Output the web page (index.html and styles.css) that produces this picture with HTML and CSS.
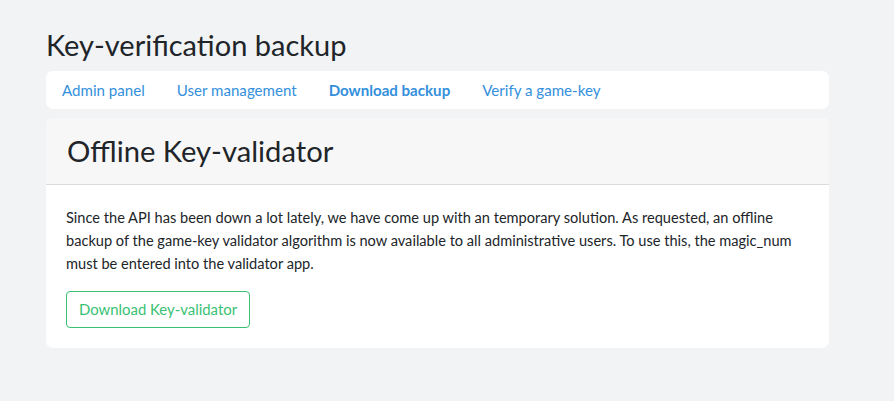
FILE: index.html
```html
<!DOCTYPE html>
<html lang="en">
<head>
<meta charset="utf-8">
<title>Key-verification backup</title>
<link rel="stylesheet" href="styles.css">
</head>
<body>
<div class="container">
  <h1 class="page-title">Key-verification backup</h1>
  <nav class="nav-card">
    <a class="nav-link" href="#">Admin panel</a>
    <a class="nav-link" href="#">User management</a>
    <a class="nav-link active" href="#">Download backup</a>
    <a class="nav-link" href="#">Verify a game-key</a>
  </nav>
  <section class="card">
    <header class="card-header">
      <h2 class="card-title">Offline Key-validator</h2>
    </header>
    <div class="card-body">
      <p class="card-text">Since the API has been down a lot lately, we have come up with an temporary solution. As requested, an offline backup of the game-key validator algorithm is now available to all administrative users. To use this, the magic_num must be entered into the validator app.</p>
      <a class="btn-outline" href="#">Download Key-validator</a>
    </div>
  </section>
</div>
</body>
</html>
```

FILE: styles.css
```css
html, body {
  margin: 0;
  padding: 0;
}
body {
  background: #f2f3f5;
  font-family: Lato, "Open Sans", sans-serif;
  color: #212529;
  font-size: 14.6px;
  line-height: 23px;
}
.container {
  width: 783px;
  padding: 0 0 0 46px;
}
.page-title {
  font-size: 29px;
  font-weight: 400;
  line-height: 35px;
  margin: 27px 0 9px 0;
}
.nav-card {
  display: flex;
  align-items: center;
  height: 38px;
  background: #fff;
  border-radius: 7px;
}
.nav-link {
  color: #3490dc;
  text-decoration: none;
  padding: 0 16px;
  font-size: 15.1px;
}
.nav-link.active {
  font-weight: 700;
}
.card {
  margin-top: 9px;
  background: #fff;
  border-radius: 7px;
  overflow: hidden;
}
.card-header {
  background: #f7f7f7;
  border-bottom: 1px solid #dcdcdc;
  padding: 15px 21px 16px 21px;
}
.card-title {
  margin: 0;
  font-size: 29.2px;
  font-weight: 400;
  line-height: 35px;
}
.card-body {
  padding: 21px 20px 20px 20px;
}
.card-text {
  margin: 0 0 16px 0;
}
.btn-outline {
  display: inline-flex;
  align-items: center;
  box-sizing: border-box;
  height: 37px;
  color: #38c172;
  border: 1px solid #38c172;
  border-radius: 4px;
  padding: 0 12px;
  text-decoration: none;
  font-size: 14.9px;
}
```
